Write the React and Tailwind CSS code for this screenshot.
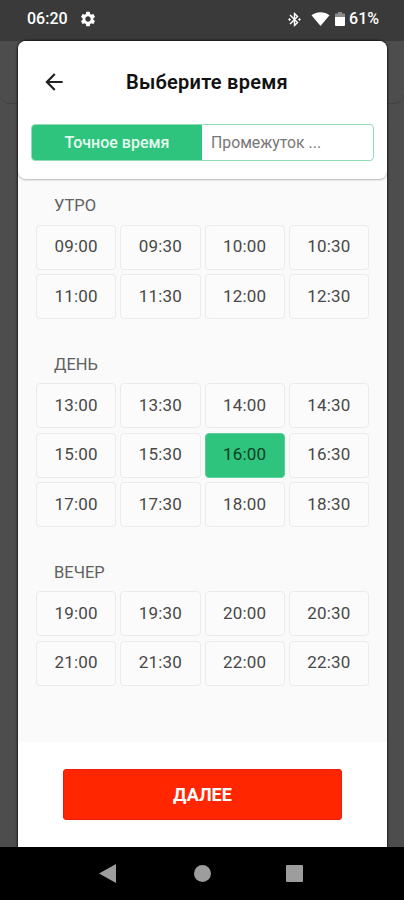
import React from 'react';
import { MdArrowBack, MdBluetoothConnected, MdSettings } from 'react-icons/md';

const sections = [
  {
    title: 'УТРО',
    slots: ['09:00', '09:30', '10:00', '10:30', '11:00', '11:30', '12:00', '12:30'],
  },
  {
    title: 'ДЕНЬ',
    slots: [
      '13:00', '13:30', '14:00', '14:30',
      '15:00', '15:30', '16:00', '16:30',
      '17:00', '17:30', '18:00', '18:30',
    ],
  },
  {
    title: 'ВЕЧЕР',
    slots: ['19:00', '19:30', '20:00', '20:30', '21:00', '21:30', '22:00', '22:30'],
  },
];

const selected = '16:00';

const StatusBar = () => (
  <div className="flex h-[41px] shrink-0 items-center bg-[#3a3a3a] pb-[3px] pl-[27px] pr-[25px] text-white">
    <span className="text-[16px] font-medium">06:20</span>
    <MdSettings className="ml-[11px] h-[18px] w-[18px]" />
    <div className="ml-auto flex items-center">
      <MdBluetoothConnected className="h-[17px] w-[17px]" />
      <svg className="ml-[8px] h-[16px] w-[19px]" viewBox="0 0 19 16" fill="currentColor">
        <path d="M9.5 15 L0.5 4.2 C5.5 0.1 13.5 0.1 18.5 4.2 Z" />
      </svg>
      <svg className="ml-[5px] h-[14px] w-[10px]" viewBox="0 0 10 14">
        <path d="M3 0h4v1.500h2q1 0 1 1V6H0V2.500q0-1 1-1h2z" fill="#8b8b8b" />
        <path d="M0 5h10V13q0 1-1 1H1q-1 0-1-1z" fill="#fff" />
      </svg>
      <span className="ml-[4px] text-[16px] font-medium">61%</span>
    </div>
  </div>
);

const Header = () => (
  <div className="relative h-[138px] shrink-0 rounded-[8px] bg-white shadow-[0_1px_2px_rgba(0,0,0,0.28)]">
    <div className="flex h-[83px] items-center pb-[2px] pl-[23px]">
      <MdArrowBack className="h-[26px] w-[26px] text-[#222]" />
      <h1 className="ml-[59px] text-[20px] font-semibold tracking-[0.25px] whitespace-nowrap text-[#111]">
        Выберите время
      </h1>
    </div>
    <div className="mx-[13px] flex h-[37px] overflow-hidden rounded-[4px] border border-[#8fdcb5]">
      <div className="flex w-[170px] items-center justify-center bg-[#2ec47e] text-[16px] font-medium text-[#e6fbef]">
        Точное время
      </div>
      <div className="flex flex-1 items-center pl-[9px] text-[15.8px] text-[#777]">Промежуток ...</div>
    </div>
  </div>
);

const Slot = ({ time }) => (
  <button
    className={
      time === selected
        ? 'h-[45px] rounded-[4px] border border-[#5bcf98] bg-[#2ec47e] text-[17px] tracking-[0.2px] text-[#083d22]'
        : 'h-[45px] rounded-[4px] border border-[#ebebeb] bg-[#fbfbfb] text-[17px] tracking-[0.2px] text-[#484848]'
    }
  >
    {time}
  </button>
);

const NavBar = () => (
  <div className="flex h-[53px] shrink-0 items-center bg-black pl-[99px]">
    <svg className="h-[19px] w-[17px]" viewBox="0 0 17 19" fill="#9d9d9d">
      <path d="M0 9.500 L17 0 V19 Z" />
    </svg>
    <div className="ml-[78px] h-[17px] w-[17px] rounded-full bg-[#9d9d9d]" />
    <div className="ml-[75px] h-[17px] w-[17px] rounded-[1px] bg-[#9d9d9d]" />
  </div>
);

const App = () => {
  return (
    <div className="flex h-[900px] w-[404px] flex-col overflow-hidden bg-[#4d4d4d] font-['Roboto','Noto_Sans',sans-serif]">
      <StatusBar />

      <div className="relative flex min-h-0 flex-1 flex-col pr-[17px] pl-[18px]">
        {/* dimmed card of the screen below the dialog */}
        <div className="absolute top-0 left-0 h-[63px] w-full rounded-b-[10px] border-b border-[#414141]" />

        <div className="relative flex flex-1 flex-col rounded-t-[8px] bg-[#fafafa] shadow-[0_0_2px_1px_rgba(0,0,0,0.6)]">
          <Header />
          <div className="flex-1 px-[18px] pt-[13px]">
            {sections.map((section) => (
              <section key={section.title} className="mb-[31.5px]">
                <h2 className="mb-[5.5px] pl-[18px] text-[16.5px] leading-[27px] text-[#616161]">
                  {section.title}
                </h2>
                <div className="grid grid-cols-4 gap-x-[4px] gap-y-[4.5px]">
                  {section.slots.map((time) => (
                    <Slot key={time} time={time} />
                  ))}
                </div>
              </section>
            ))}
          </div>
          <div className="h-[105px] shrink-0 bg-white px-[45px] pt-[27px]">
            <button className="h-[51px] w-full rounded-[3px] border border-[#ee1c0c] bg-[#ff2600] text-[18px] font-bold text-white">
              ДАЛЕЕ
            </button>
          </div>
        </div>
      </div>

      <NavBar />
    </div>
  );
};

export default App;
